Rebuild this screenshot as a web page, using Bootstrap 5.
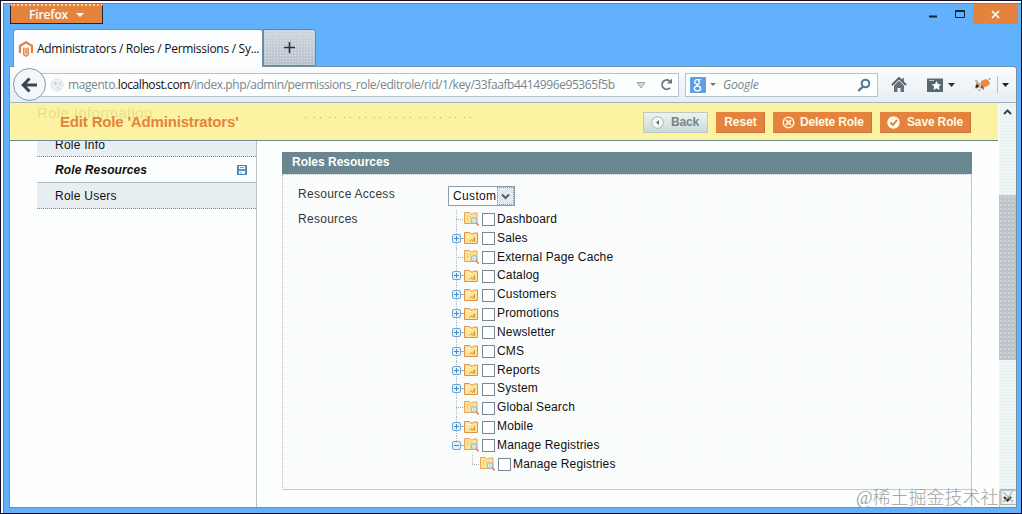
<!DOCTYPE html>
<html lang="en">
<head>
<meta charset="utf-8">
<title>Administrators / Roles / Permissions / System</title>
<link href="https://cdn.jsdelivr.net/npm/bootstrap@5.3.0/dist/css/bootstrap.min.css" rel="stylesheet">
<style>
html,body{height:514px;overflow:hidden}
body{font-family:"Liberation Sans",Arial,sans-serif;font-size:12px;line-height:16px;color:#111;background:#fff}
svg{display:block;flex:none}
.screen{width:1022px;height:514px;border:1px solid #160c22;padding:2px 0 0 2px}
.win{height:510px;background:#62b1fc;border:1px solid #6687a3;border-right:0;border-bottom:0;padding:0 4px 5px 5px}
.ui{font-family:"Open Sans","Noto Sans",sans-serif}
.titlebar{height:25px;padding-left:1px;margin-right:-1px}
.ff-menu{width:93px;height:20px;background:#e3833e;border:1px solid #26232d;border-width:0 1px 1px;border-top:2px dotted #ffd09a;color:#fff;font-weight:600;font-size:12px;letter-spacing:-.15px;padding-left:18px}
.caret{width:0;height:0;border:4px solid transparent;border-top-color:#fff;border-bottom:0}
.wbtns{height:20px}
.close-btn{width:45px;height:20px;background:#e3833e}
.tabs{height:37px;margin-left:4px}
.tab-on{width:250px;height:38px;background:#fcfdfe;border:1px solid #7292a8;border-bottom:0;border-radius:3px 3px 0 0;padding-left:4px;position:relative;z-index:1;font-size:12px;color:#111;letter-spacing:-.29px;white-space:nowrap}
.tab-new{width:53px;height:37px;border:1px solid #66879f;border-radius:0 3px 0 0;background:radial-gradient(circle,#e0e6ea .5px,transparent .7px) 0 0/3px 3px,linear-gradient(#cdd6dd,#b9c3cc)}
.toolbar{height:37px;background:linear-gradient(#fbfcfd,#e6eef4);border:1px solid #7292a8;border-bottom-color:#a5b4b9;border-radius:0 3px 0 0;padding-left:3px}
.back-circle{width:33px;height:33px;border:1px solid #8497a5;border-radius:50%;background:#f2f7fb;position:relative;z-index:1}
.field{height:24px;background:#fdfefe;border:1px solid #b4c3cd;color:#78868b;white-space:nowrap}
.url{width:650px;margin-left:-17px;padding-left:22px;font-size:12px;letter-spacing:-.41px}
.url b{font-weight:400;color:#111}
.search{width:193px;margin-left:6px;padding-left:4px;letter-spacing:-.25px}
.page{height:405px;background:#fdfefe;border-left:1px solid #7292a8;border-right:1px solid #7292a8;border-bottom:1px solid #7292a8}
.content-col{width:988px;position:relative}
.floating{height:38px;background:#fcf3a2;border-bottom:1px solid #6c8b98;padding:1px 27px 0 50px}
.floating h1{font-size:15px;font-weight:700;color:#e3833e;margin:0;line-height:20px;letter-spacing:-.17px}
.ghost{position:absolute;left:27px;top:1px;font-size:15px;letter-spacing:.35px;line-height:18px;color:rgba(190,165,90,.3)}
.specks{position:absolute;left:295px;top:14px;width:172px;height:1px;background:repeating-linear-gradient(90deg,#c9a768 0 1px,transparent 1px 9px,#c9a768 9px 10px,transparent 10px 15px)}
.mbtn{height:21px;background:#e3833e;color:#fffbe4;font-weight:700;font-size:12px;letter-spacing:-.15px;border:1px solid #e3833e;border-right-color:#c9743a;border-bottom-color:#c9743a;white-space:nowrap}
.mbtn.back{background:linear-gradient(#eef3ed,#cbd9dc);color:#74868c;border-color:#bccac6}
.side{width:247px;height:366px;border-right:1px solid #b9c1c5;padding-left:27px;flex:none}
.side-item{height:26px;padding:0 9px 0 18px;border-bottom:1px dotted #6f8e98;background:#e7eff2;color:#111}
.side-item.active{background:#fdfefe;border-bottom:1px solid #aebdc6;font-weight:700;font-style:italic;letter-spacing:.1px}
.panel{width:690px;margin:11px 0 0 25px}
.panel-head{height:22px;background:#6a8790;color:#fff;font-weight:700;padding-left:10px;line-height:21px}
.panel-body{height:316px;background:radial-gradient(circle,#f0f7f5 .6px,transparent .8px) 0 0/5px 5px,#fbfdfd;border:1px solid #c2c9cb;border-left:1px dotted #adb8bb;border-top:1px dotted #b6c5c8;padding:11px 0 0 15px}
.lbl{width:150px;letter-spacing:.28px;color:#33383a}
.sel{width:67px;height:20px;border:1px solid #8aa0aa;background:#fff;padding-left:4px;letter-spacing:.35px}
.sel-arrow{width:17px;height:18px;background:#dfe9ee;border:1px dotted #7f959f}
.tree{margin:4px 0 0;padding:0;list-style:none}
.tree li{height:18.83px;display:flex;align-items:center;position:relative;padding-left:4px}
.tree li::before{content:"";position:absolute;left:8px;top:0;bottom:0;border-left:1px dotted #b5bcbf}
.tree li.end::before{bottom:50%}
.tree li.sub{padding-left:20px}
.tree li.sub::before{left:24px;bottom:50%}
.tree svg{position:relative}
.elbow{width:9px;height:1px;border-top:1px dotted #a5adb0}
.box{width:13px;height:13px;border:1px solid #758a95;background:#fff;margin:1px 2px 0 3px;flex:none}
.tree span{line-height:16px;letter-spacing:.15px;margin-bottom:1px}
.scroll{width:17px;background:radial-gradient(circle,#dcebe8 .6px,transparent .8px) 0 0/3px 3px,#eff5f7;flex:none}
.thumb{height:165px;margin-top:75px;background:radial-gradient(circle,#dadddf .6px,transparent .9px) 0 0/4px 4px,#bfc4c8}
.wm{position:absolute;left:856px;top:486px;font-family:"Liberation Serif","Noto Sans CJK SC",sans-serif;font-weight:300;font-size:18px;line-height:24px;color:#a1a3a5;white-space:nowrap;z-index:3}
</style>
</head>
<body>
<svg width="0" height="0" class="position-absolute">
<symbol id="plus" viewBox="0 0 9 9"><rect x=".5" y=".5" width="8" height="8" rx="1.5" fill="#e5f2fc" stroke="#6fa5d5"/><path d="M2 4.5h5M4.5 2v5" stroke="#4a88c4"/></symbol>
<symbol id="minus" viewBox="0 0 9 9"><rect x=".5" y=".5" width="8" height="8" rx="1.5" fill="#e5f2fc" stroke="#6fa5d5"/><path d="M2 4.5h5" stroke="#4a88c4"/></symbol>
<symbol id="folder" viewBox="0 0 16 14"><path d="M1.500 12.500v-11h5l1.500 1.500h2l1-1h3.500v10.500z" fill="#fde595" stroke="#e2914b"/><path d="M3 4.500h5M3 6.500h3" stroke="#fff6cf"/><path d="M6.500 10.500l2-2 1 2 2-4v4.500" fill="none" stroke="#d9963f"/></symbol>
<symbol id="leaf" viewBox="0 0 16 14"><path d="M1.500 11.500v-11h5l1.500 1.500h1.500l1-1h3.500v10.500z" fill="#fde595" stroke="#e7a163"/><path d="M4 4h1M7 5h1M4 7h1" stroke="#d9963f"/><circle cx="11" cy="8.500" r="3" fill="#d3e4ec" stroke="#9fb3bb"/><path d="M13.300 11l2.300 2.500" stroke="#d98246" stroke-width="1.500"/></symbol>
</svg>
<div class="screen"><div class="win">
  <div class="titlebar d-flex justify-content-between ui">
    <div class="ff-menu d-flex align-items-center">Firefox<i class="caret ms-2"></i></div>
    <div class="wbtns d-flex align-items-center">
      <svg width="50" height="20" viewBox="0 0 50 20"><path d="M6 12.500h8" stroke="#172431" stroke-width="2"/><path d="M32.500 6.500h9v7h-9zM32 7.500h10" fill="none" stroke="#172431"/></svg>
      <div class="close-btn d-flex align-items-center justify-content-center"><svg width="9" height="9" viewBox="0 0 9 9"><path d="M1 1l7 7M8 1l-7 7" stroke="#fff" stroke-width="1.700"/></svg></div>
    </div>
  </div>
  <div class="tabs d-flex">
    <div class="tab-on ui d-flex align-items-center"><svg width="16" height="16" viewBox="0 0 16 16" style="margin-right:3px"><path d="M2 12V4.800L8 1.200l6 3.600V12" fill="none" stroke="#e3833e" stroke-width="2.200"/><path d="M5.800 6.500v7L8 15l2.200-1.500v-7M8 7v6" fill="none" stroke="#e3833e" stroke-width="1.500"/></svg><span>Administrators / Roles / Permissions / Sy...</span></div>
    <div class="tab-new d-flex align-items-center justify-content-center"><svg width="11" height="11" viewBox="0 0 11 11"><path d="M0 5.500h11M5.500 0v11" stroke="#29323b" stroke-width="1.600"/></svg></div>
  </div>
  <div class="toolbar d-flex align-items-center ui">
    <div class="back-circle d-flex align-items-center justify-content-center"><svg width="17" height="16" viewBox="0 0 17 16"><path d="M2 8h14M8.500 1.500L2.200 8l6.300 6.500" fill="none" stroke="#3c474e" stroke-width="3"/></svg></div>
    <div class="field url d-flex align-items-center">
      <svg width="14" height="14" viewBox="0 0 14 14" style="margin:0 4px 0 -2px"><circle cx="7" cy="7" r="6" fill="#eef2f4" stroke="#cfd8dc" stroke-dasharray="2 1"/><path d="M3 5l3-2 1 3-2 2zM8 4l3 1-1 3zM6 9l3 0 0 3z" fill="#cdd6da"/></svg>
      <span>magento.<b>localhost.com</b>/index.php/admin/permissions_role/editrole/rid/1/key/33faafb4414996e95365f5b</span>
      <svg width="10" height="8" viewBox="0 0 10 8" class="ms-auto"><path d="M1 1.500h8L5 7z" fill="#d5d9dc" stroke="#9ca8ae"/></svg>
      <svg width="13" height="13" viewBox="0 0 13 13" style="margin:0 5px 0 14px"><path d="M10 9.800A4.600 4.600 0 1 1 9.500 3" fill="none" stroke="#66757f" stroke-width="1.800"/><path d="M7 5.500h5V.5z" fill="#66757f"/></svg>
    </div>
    <div class="field search d-flex align-items-center">
      <svg width="16" height="16" viewBox="0 0 16 16"><rect width="16" height="16" rx="1" fill="#5a9fe8"/><circle cx="7" cy="5" r="2.300" fill="none" stroke="#fff" stroke-width="1.300"/><ellipse cx="7.500" cy="11.500" rx="3.200" ry="2.300" fill="none" stroke="#fff" stroke-width="1.300"/><path d="M8 2.700h3M8.500 7l-2 1 2 1.500" fill="none" stroke="#fff"/></svg>
      <i class="caret" style="border-top-color:#6c7780;border-width:3.500px 3px 0;margin:0 7px 0 4px"></i><em>Google</em>
      <svg width="14" height="14" viewBox="0 0 14 14" class="ms-auto" style="margin-right:6px"><circle cx="8.500" cy="5.500" r="3.800" fill="none" stroke="#4f7796" stroke-width="2"/><path d="M6 8.500L1.300 13" stroke="#4f7796" stroke-width="2.400"/></svg>
    </div>
    <svg width="130" height="22" viewBox="0 0 130 22" class="ms-2">
      <path d="M6 11l7-7 7 7" fill="none" stroke="#505b63" stroke-width="1.800"/><path d="M8 11.500l5-5 5 5V18h-3.500v-4h-3v4H8z" fill="#65727a"/><path d="M17 4v3" stroke="#505b63" stroke-width="1.500"/>
      <path d="M41 4.500h16V18H41z" fill="#586872"/><path d="M43 6.500h5" stroke="#b6c2c8"/><path d="M50.500 7l1.500 3 3.300.4-2.400 2.200.7 3.300-3.100-1.700-3 1.700.6-3.300-2.400-2.200 3.300-.4z" fill="#fff"/><path d="M62 9h7l-3.500 4z" fill="#2b343a"/>
      <path d="M95 7l5-2 3 2 1 3-4 3-5-1z" fill="#e98b3e"/><path d="M90 8l5 1-1 4-4 2z" fill="#b9a98f"/><circle cx="96" cy="13" r="1.500" fill="#b63d2b"/><path d="M89 14l2-1M94 15l-1 2M98 13l-1 3M103 6l1-2M92 7l-3 0" stroke="#8a7650"/><circle cx="91" cy="12" r="1.500" fill="#222"/>
      <path d="M111.500 2v17" stroke="#b7c0c7"/><path d="M116 9h7l-3.500 4z" fill="#1d252b"/>
    </svg>
  </div>
  <div class="page d-flex">
    <div class="content-col">
      <div class="ghost">Role Information</div><div class="specks"></div>
      <header class="floating d-flex align-items-center">
        <h1>Edit Role 'Administrators'</h1>
        <div class="d-flex ms-auto">
          <div class="mbtn back d-flex align-items-center" style="width:65px;padding-left:7px;margin-right:8px"><svg width="13" height="13" viewBox="0 0 13 13" style="margin-right:7px"><circle cx="6.500" cy="6.500" r="5.800" fill="#f4f7f7" stroke="#a7b5b9"/><path d="M8 4v5L5 6.500z" fill="#5d7178"/></svg>Back</div>
          <div class="mbtn d-flex align-items-center justify-content-center" style="width:49px;margin-right:8px;letter-spacing:0">Reset</div>
          <div class="mbtn d-flex align-items-center" style="width:99px;padding-left:8px;margin-right:8px"><svg width="13" height="13" viewBox="0 0 13 13" style="margin-right:5px"><circle cx="6.500" cy="6.500" r="5.300" fill="none" stroke="#fff3d0" stroke-width="1.500"/><path d="M4 4l5 5M9 4L4 9" stroke="#fff3d0" stroke-width="1.800"/></svg>Delete Role</div>
          <div class="mbtn d-flex align-items-center" style="width:91px;padding-left:6px"><svg width="13" height="13" viewBox="0 0 13 13" style="margin-right:7px"><circle cx="6.500" cy="6.500" r="6.200" fill="#fffbe8"/><path d="M3.500 6.500l2.500 2.500 4-5" fill="none" stroke="#d97a36" stroke-width="1.800"/></svg>Save Role</div>
        </div>
      </header>
      <div class="d-flex">
        <nav class="side">
          <div class="side-item d-flex align-items-end" style="height:16px;overflow:hidden"><span style="margin-bottom:3px;letter-spacing:.25px">Role Info</span></div>
          <div class="side-item active d-flex align-items-center justify-content-between"><span>Role Resources</span><svg width="10" height="10" viewBox="0 0 10 10"><path d="M.5.5h9v9h-9z" fill="#5b91be" stroke="#4a80ae"/><path d="M2 1h6v3H2zM2 6h6v3H2z" fill="#f0f7fc"/><path d="M3 2.500h4M4 7v2" stroke="#7ba7c9"/></svg></div>
          <div class="side-item d-flex align-items-center"><span style="letter-spacing:.25px">Role Users</span></div>
        </nav>
        <section class="panel">
          <div class="panel-head">Roles Resources</div>
          <div class="panel-body">
            <div class="d-flex"><div class="lbl">Resource Access</div><div class="sel d-flex align-items-center">Custom<div class="sel-arrow ms-auto d-flex align-items-center justify-content-center"><svg width="9" height="7" viewBox="0 0 9 7"><path d="M1 1.500l3.500 3.500L8 1.500" fill="none" stroke="#4f626b" stroke-width="2"/></svg></div></div></div>
            <div class="d-flex"><div class="lbl" style="padding-top:5px">Resources</div>
              <ul class="tree">
                <li><i class="elbow ms-1" style="width:7px"></i><svg width="16" height="14"><use href="#leaf"/></svg><i class="box"></i><span>Dashboard</span></li>
                <li><svg width="9" height="9"><use href="#plus"/></svg><i class="elbow" style="width:2px"></i><svg width="16" height="14"><use href="#folder"/></svg><i class="box"></i><span>Sales</span></li>
                <li><i class="elbow ms-1" style="width:7px"></i><svg width="16" height="14"><use href="#leaf"/></svg><i class="box"></i><span>External Page Cache</span></li>
                <li><svg width="9" height="9"><use href="#plus"/></svg><i class="elbow" style="width:2px"></i><svg width="16" height="14"><use href="#folder"/></svg><i class="box"></i><span>Catalog</span></li>
                <li><svg width="9" height="9"><use href="#plus"/></svg><i class="elbow" style="width:2px"></i><svg width="16" height="14"><use href="#folder"/></svg><i class="box"></i><span>Customers</span></li>
                <li><svg width="9" height="9"><use href="#plus"/></svg><i class="elbow" style="width:2px"></i><svg width="16" height="14"><use href="#folder"/></svg><i class="box"></i><span>Promotions</span></li>
                <li><svg width="9" height="9"><use href="#plus"/></svg><i class="elbow" style="width:2px"></i><svg width="16" height="14"><use href="#folder"/></svg><i class="box"></i><span>Newsletter</span></li>
                <li><svg width="9" height="9"><use href="#plus"/></svg><i class="elbow" style="width:2px"></i><svg width="16" height="14"><use href="#folder"/></svg><i class="box"></i><span>CMS</span></li>
                <li><svg width="9" height="9"><use href="#plus"/></svg><i class="elbow" style="width:2px"></i><svg width="16" height="14"><use href="#folder"/></svg><i class="box"></i><span>Reports</span></li>
                <li><svg width="9" height="9"><use href="#plus"/></svg><i class="elbow" style="width:2px"></i><svg width="16" height="14"><use href="#folder"/></svg><i class="box"></i><span>System</span></li>
                <li><i class="elbow ms-1" style="width:7px"></i><svg width="16" height="14"><use href="#leaf"/></svg><i class="box"></i><span>Global Search</span></li>
                <li><svg width="9" height="9"><use href="#plus"/></svg><i class="elbow" style="width:2px"></i><svg width="16" height="14"><use href="#folder"/></svg><i class="box"></i><span>Mobile</span></li>
                <li class="end"><svg width="9" height="9"><use href="#minus"/></svg><i class="elbow" style="width:2px"></i><svg width="16" height="14"><use href="#leaf"/></svg><i class="box"></i><span>Manage Registries</span></li>
                <li class="sub"><i class="elbow ms-1" style="width:7px"></i><svg width="16" height="14"><use href="#leaf"/></svg><i class="box"></i><span>Manage Registries</span></li>
              </ul>
            </div>
          </div>
        </section>
      </div>
    </div>
    <div class="scroll d-flex flex-column ms-auto align-items-stretch">
      <svg width="17" height="17" viewBox="0 0 17 17"><path d="M5 11l3.500-3.500L12 11" fill="none" stroke="#3c474c" stroke-width="2"/></svg>
      <div class="thumb"></div>
      <svg width="17" height="17" viewBox="0 0 17 17" class="mt-auto"><path d="M.5 17V.5H17" fill="none" stroke="#bcc8ca"/><path d="M5 7l3.500 3.500L12 7" fill="none" stroke="#222c30" stroke-width="2"/></svg>
    </div>
  </div>
</div></div>
<div class="wm">@稀土掘金技术社区</div>
<script src="https://cdn.jsdelivr.net/npm/bootstrap@5.3.0/dist/js/bootstrap.bundle.min.js"></script>
</body>
</html>
